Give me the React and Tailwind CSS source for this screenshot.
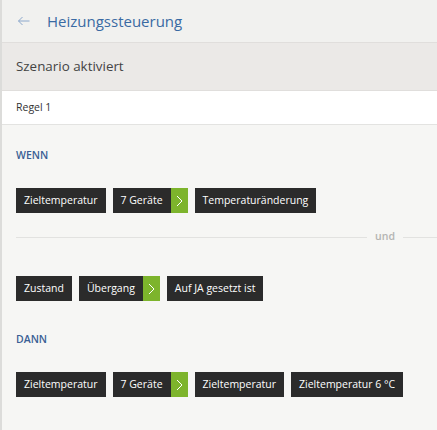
import React from 'react';

const Chip = ({ label, arrow }) => (
  <div className="flex h-[25px] items-stretch whitespace-nowrap bg-[#2b2b2b] text-white">
    <span className="flex items-center px-[8px]">{label}</span>
    {arrow && (
      <span className="flex w-[17px] items-center justify-center bg-[#7db42c]">
        <svg width="7" height="12" viewBox="0 0 7 12" fill="none">
          <path d="M1 1l5 5-5 5" stroke="#ffffff" strokeWidth="1" />
        </svg>
      </span>
    )}
  </div>
);

const ChipRow = ({ items, className }) => (
  <div className={`flex gap-[7px] text-[10.5px] ${className}`}>
    {items.map((it, i) => (
      <Chip key={i} label={it.label} arrow={it.arrow} />
    ))}
  </div>
);

export default function App() {
  return (
    <div
      className="h-[430px] w-[437px] overflow-hidden border-l-2 border-[#dcdcda] bg-[#f6f6f4]"
      style={{ fontFamily: '"Open Sans", "Noto Sans", sans-serif' }}
    >
      {/* Kopfzeile */}
      <div className="flex h-[42px] items-center bg-[#f1f1ef] pl-[15px]">
        <svg width="13" height="10" viewBox="0 0 13 10" fill="none">
          <path d="M12.5 5H1.5M5.5 1L1.5 5l4 4" stroke="#8ca8cc" strokeWidth="1" />
        </svg>
        <span className="ml-[17px] text-[15px] text-[#3a6aa3]">Heizungssteuerung</span>
      </div>
      <div className="flex h-[49px] items-center border-y border-[#e0dedc] bg-[#ebe9e7] pl-[14px] text-[13.4px] text-[#444444]">
        Szenario aktiviert
      </div>
      <div className="flex h-[34px] items-center border-b border-[#e3e3e1] bg-white pl-[14px] text-[10.5px] text-[#333333]">
        Regel 1
      </div>

      <div className="pl-[14px]">
        <div className="mt-[22px] h-[16px] text-[10.5px] font-semibold leading-[16px] text-[#3a5f94]">WENN</div>
        <ChipRow
          className="mt-[25px]"
          items={[
            { label: 'Zieltemperatur' },
            { label: '7 Geräte', arrow: true },
            { label: 'Temperaturänderung' },
          ]}
        />
        <div className="mt-[16px] flex h-[16px] items-center">
          <div className="h-px flex-1 bg-[#e2e2e0]" />
          <span className="px-[8px] text-[10.5px] font-semibold text-[#b4b4b2]">und</span>
          <div className="h-px w-[34px] bg-[#e2e2e0]" />
        </div>
        <ChipRow
          className="mt-[31px]"
          items={[
            { label: 'Zustand' },
            { label: 'Übergang', arrow: true },
            { label: 'Auf JA gesetzt ist' },
          ]}
        />
        <div className="mt-[30px] h-[16px] text-[10.5px] font-semibold leading-[16px] text-[#3a5f94]">DANN</div>
        <ChipRow
          className="mt-[25px]"
          items={[
            { label: 'Zieltemperatur' },
            { label: '7 Geräte', arrow: true },
            { label: 'Zieltemperatur' },
            { label: 'Zieltemperatur 6 °C' },
          ]}
        />
      </div>
    </div>
  );
}
